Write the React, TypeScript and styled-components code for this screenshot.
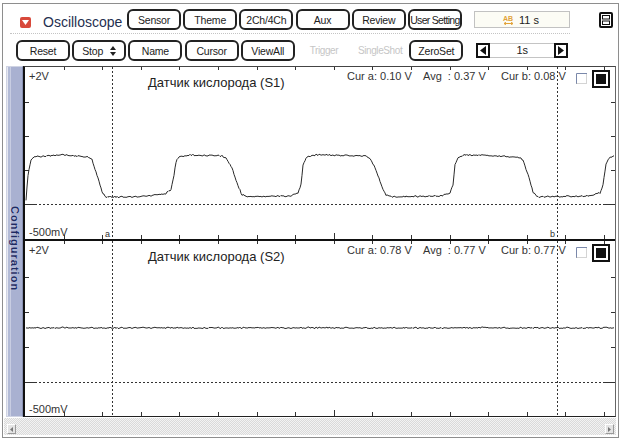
import React from "react";
import styled, { createGlobalStyle } from "styled-components";

const GlobalStyle = createGlobalStyle`
  html, body {
    margin: 0;
    padding: 0;
    background: #fff;
  }
  body {
    font-family: "Liberation Sans", Arial, sans-serif;
  }
`;

const Page = styled.div`
  width: 622px;
  height: 441px;
  box-sizing: border-box;
  padding: 3px 3px 3px 2px;
  background: #fff;
`;

const Frame = styled.div`
  height: 100%;
  box-sizing: border-box;
  border: 1px solid #8e8e8e;
  display: flex;
  flex-direction: column;
  padding-top: 5px;
`;

const TopBar = styled.div`
  display: flex;
  align-items: center;
  height: 21px;
  padding-left: 13px;
`;

const Brand = styled.div`
  width: 111px;
  height: 21px;
  box-sizing: border-box;
  padding: 5px 0 0 4px;
  display: flex;
  align-items: center;
  gap: 12px;
`;

const RedIcon = styled.span`
  width: 11px;
  height: 11px;
  border-radius: 2px;
  background: #d8493b;
  display: flex;
  align-items: center;
  justify-content: center;
`;

const AppTitle = styled.span`
  font-size: 14px;
  line-height: 16px;
  color: #1f3050;
`;

const Group = styled.div`
  display: flex;
  align-items: center;
  gap: 2.2px;
`;

const Btn = styled.button<{ $tight?: boolean }>`
  width: 54px;
  height: 21px;
  box-sizing: border-box;
  padding: 0;
  border: 2px solid #222;
  border-radius: 6px;
  background: #fff;
  color: #222;
  font: 10.5px "Liberation Sans", Arial, sans-serif;
  letter-spacing: ${(p) => (p.$tight ? "-0.7px" : "-0.2px")};
  display: flex;
  align-items: center;
  justify-content: center;
  gap: 7px;
`;

const Ghost = styled.span`
  width: 54px;
  text-align: center;
  font-size: 10px;
  letter-spacing: -0.4px;
  color: #c6c6c6;
`;

const Info = styled.div`
  margin-left: 12px;
  width: 96px;
  height: 17px;
  box-sizing: border-box;
  border: 1px solid #c2c2c2;
  background: #fcfcf5;
  display: flex;
  align-items: center;
  padding-left: 28px;
  gap: 6px;
  font-size: 11px;
  color: #222;
`;

const AbMark = styled.span`
  display: inline-flex;
  flex-direction: column;
  align-items: center;
  font: bold 7px/7px "Liberation Sans", Arial, sans-serif;
  color: #e2a33a;
`;

const CornerIcon = styled.svg`
  margin-left: auto;
  margin-right: 5px;
`;

const Divider = styled.div`
  margin: 3px 0 6px 7px;
  width: 560px;
  border-top: 1px dotted #c4c4c4;
`;

const ToolRow = styled.div`
  display: flex;
  align-items: center;
  height: 21px;
  padding-left: 13px;
  gap: 2.2px;
`;

const Stepper = styled.div`
  margin-left: 10.8px;
  display: flex;
  align-items: center;
`;

const ArrowBox = styled.span`
  width: 14px;
  height: 15px;
  box-sizing: border-box;
  border: 2px solid #111;
  display: flex;
  align-items: center;
  justify-content: center;
`;

const ValueBox = styled.span`
  width: 64px;
  height: 15px;
  box-sizing: border-box;
  border: 1px solid #c4c4c4;
  border-left: none;
  border-right: none;
  font-size: 11px;
  line-height: 13px;
  color: #222;
  text-align: center;
`;

const ChartArea = styled.div`
  display: flex;
  height: 351px;
  margin-top: 5px;
  padding-left: 3px;
`;

const Sidebar = styled.div`
  width: 17px;
  box-sizing: border-box;
  border: 1px solid #cfd3e3;
  border-right-color: #8891b3;
  background: linear-gradient(
    to right,
    #e6e8f1 0 1px,
    #b3bbd6 1px 3px,
    #c8cde2 3px 4px,
    #a9b1d1 4px
  );
  display: flex;
  align-items: center;
  justify-content: center;
  padding-top: 14px;
`;

const SideLabel = styled.span`
  writing-mode: vertical-rl;
  font: bold 11px "Liberation Sans", Arial, sans-serif;
  letter-spacing: 1px;
  color: #1e2b63;
  text-shadow: 0 0 1px #e8ecf8;
`;

const Plot = styled.div`
  width: 593px;
  box-sizing: border-box;
  border-left: 2px solid #111;
  border-right: 1px solid #666;
  border-top: 1px solid #444;
  border-bottom: 1px solid #222;
  display: flex;
  flex-direction: column;
`;

const Panel = styled.div<{ $h: number; $split?: boolean }>`
  position: relative;
  height: ${(p) => p.$h}px;
  border-top: ${(p) => (p.$split ? "2px solid #111" : "none")};
  background: #fff;
`;

const Trace = styled.svg`
  position: absolute;
  left: 0;
  top: 0;
`;

const Overlay = styled.div`
  position: relative;
  height: 100%;
  box-sizing: border-box;
  padding: 3px 0 0 4px;
  display: flex;
  flex-direction: column;
  justify-content: space-between;
  font-size: 11px;
  line-height: 13px;
  color: #333;
`;

const PanelHead = styled.div`
  display: flex;
  align-items: flex-start;
`;

const Cell = styled.span<{ $w: number }>`
  flex: none;
  width: ${(p) => p.$w}px;
  white-space: pre;
`;

const ChannelName = styled(Cell)`
  font-size: 13px;
  line-height: 15px;
  margin-top: 4.5px;
  color: #222;
`;

const DottedBox = styled.svg`
  margin-top: 3px;
`;

const BlackBox = styled.svg`
  margin-left: 5px;
`;

const Scroll = styled.div`
  margin: 1px 0 0 1px;
  width: 612px;
  height: 17px;
  box-sizing: border-box;
  padding: 0 2px 1px 3px;
  display: flex;
  align-items: flex-end;
  justify-content: space-between;
  background: repeating-conic-gradient(#dadada 0 25%, #f3f3f3 0 50%) 0 0 / 2px 2px;
`;

const ScrollKnob = styled.span`
  width: 9px;
  height: 10px;
  box-sizing: border-box;
  border: 1px solid #9a9a9a;
  border-top-color: #fff;
  border-left-color: #fff;
  background: #e4e4e4;
  display: flex;
  align-items: center;
  justify-content: center;
`;

const hash = (n: number) => {
  const s = Math.sin(n * 12.9898 + 78.233) * 43758.5453;
  return s - Math.floor(s);
};

const buildWave = (keys: number[][], noise: number, ox: number, oy: number) => {
  let d = "";
  let k = 0;
  for (let x = keys[0][0]; x <= keys[keys.length - 1][0]; x++) {
    while (k < keys.length - 2 && x > keys[k + 1][0]) k++;
    const [xa, ya] = keys[k];
    const [xb, yb] = keys[k + 1];
    const t = Math.min(1, Math.max(0, (x - xa) / (xb - xa)));
    const r = hash(x);
    let y = ya + (yb - ya) * t + (r - 0.5) * noise * 2;
    if (r > 0.93) y -= 1.5;
    d += `${d ? "L" : "M"}${x - ox} ${(y - oy).toFixed(1)}`;
  }
  return d;
};

const s1Keys = [
  [26, 200], [28, 175], [31, 160], [34, 157], [60, 155], [88, 157], [92, 160],
  [98, 178], [102, 192], [106, 197], [140, 197], [165, 194], [171, 190],
  [174, 175], [176, 162], [179, 157], [190, 155], [222, 156], [226, 158],
  [232, 168], [238, 186], [242, 195], [248, 197], [290, 196], [298, 193],
  [301, 185], [303, 165], [306, 158], [315, 155], [365, 156], [370, 158],
  [376, 170], [382, 187], [386, 195], [392, 197], [440, 196], [450, 193],
  [453, 185], [455, 165], [458, 158], [465, 155], [518, 157], [523, 160],
  [529, 178], [533, 192], [537, 197], [590, 196], [600, 193], [603, 185],
  [606, 165], [609, 158], [614, 156],
];

const s2Keys = [
  [26, 328], [614, 328],
];

interface ChannelProps {
  name: string;
  curA: string;
  avg: string;
  curB: string;
  height: number;
  top: number;
  zeroY: number;
  gridY: number[];
  wave: number[][];
  noise: number;
  markers?: boolean;
  split?: boolean;
}

const Channel: React.FC<ChannelProps> = (props: ChannelProps) => {
  const w = 590;
  const h = props.height;
  const ticks = Array.from({ length: 15 }, (_, i) => Math.round(38.6 * (i + 1)) + 0.5);
  const cursors = [87.5, 532.5];

  return (
    <Panel $h={h} $split={props.split}>
      <Trace width={w} height={h} viewBox={`0 0 ${w} ${h}`}>
        <g stroke="#333" strokeWidth="1" shapeRendering="crispEdges">
          {ticks.map((x, i) => (
            <line key={`t${i}`} x1={x} y1={0} x2={x} y2={3} />
          ))}
          {ticks.map((x, i) => (
            <line key={`b${i}`} x1={x} y1={h} x2={x} y2={h - (i === 7 ? 6 : 4)} />
          ))}
          {props.gridY.map((y) => (
            <line key={`l${y}`} x1={0} y1={y + 0.5} x2={4} y2={y + 0.5} />
          ))}
          {props.gridY.map((y) => (
            <line key={`r${y}`} x1={w - 4} y1={y + 0.5} x2={w} y2={y + 0.5} />
          ))}
          <line x1={0} y1={props.zeroY + 0.5} x2={10} y2={props.zeroY + 0.5} />
          <line x1={w - 12} y1={props.zeroY + 0.5} x2={w} y2={props.zeroY + 0.5} />
          <line
            x1={10}
            y1={props.zeroY + 0.5}
            x2={w - 12}
            y2={props.zeroY + 0.5}
            strokeDasharray="2 2"
          />
          {cursors.map((x) => (
            <line key={`c${x}`} x1={x} y1={0} x2={x} y2={h} strokeDasharray="2 2" />
          ))}
        </g>
        <path
          d={buildWave(props.wave, props.noise, 25, props.top)}
          fill="none"
          stroke="#2a2a2a"
          strokeWidth="1"
        />
        {props.markers && (
          <g fontFamily="Liberation Sans, Arial, sans-serif" fontSize="9" fill="#333">
            <text x={80} y={h - 2}>a</text>
            <text x={525} y={h - 2}>b</text>
          </g>
        )}
      </Trace>
      <Overlay>
        <PanelHead>
          <Cell $w={119}>+2V</Cell>
          <ChannelName $w={199}>{props.name}</ChannelName>
          <Cell $w={76}>{props.curA}</Cell>
          <Cell $w={78}>{props.avg}</Cell>
          <Cell $w={75}>{props.curB}</Cell>
          <DottedBox width="11" height="11" viewBox="0 0 11 11">
            <path d="M0.5 11V0.5H11" fill="none" stroke="#7a88aa" />
            <path d="M0.5 10.5H10.5V0.5" fill="none" stroke="#a8a8a8" strokeDasharray="1 1" />
          </DottedBox>
          <BlackBox width="18" height="18" viewBox="0 0 18 18">
            <rect x="1" y="1" width="16" height="16" fill="#fff" stroke="#111" strokeWidth="2" />
            <rect x="4" y="4" width="10" height="10" fill="#111" />
          </BlackBox>
        </PanelHead>
        <span>-500mV</span>
      </Overlay>
    </Panel>
  );
};

export default function App() {
  return (
    <Page>
      <GlobalStyle />
      <Frame>
        <TopBar>
          <Brand>
            <RedIcon>
              <svg width="7" height="5" viewBox="0 0 7 5">
                <path d="M0 0H7L3.5 5Z" fill="#fff" />
              </svg>
            </RedIcon>
            <AppTitle>Oscilloscope</AppTitle>
          </Brand>
          <Group>
            <Btn>Sensor</Btn>
            <Btn>Theme</Btn>
            <Btn>2Ch/4Ch</Btn>
            <Btn>Aux</Btn>
            <Btn>Review</Btn>
            <Btn $tight>User Setting</Btn>
          </Group>
          <Info>
            <AbMark>
              AB
              <svg width="9" height="3" viewBox="0 0 9 3">
                <path d="M0 1.5H9M0 1.5L2 0M0 1.5L2 3M9 1.5L7 0M9 1.5L7 3" stroke="#e2a33a" strokeWidth="1" />
              </svg>
            </AbMark>
            <span>11 s</span>
          </Info>
          <CornerIcon width="14" height="16" viewBox="0 0 14 16">
            <rect x="1" y="1" width="12" height="14" rx="1" fill="#fff" stroke="#111" strokeWidth="2" />
            <rect x="3.5" y="3.5" width="7" height="3.5" fill="none" stroke="#111" />
            <rect x="3.5" y="9" width="7" height="3.5" fill="none" stroke="#111" />
          </CornerIcon>
        </TopBar>
        <Divider />
        <ToolRow>
          <Btn>Reset</Btn>
          <Btn>
            Stop
            <svg width="6" height="10" viewBox="0 0 6 10">
              <path d="M0 4L3 0L6 4ZM0 6L3 10L6 6Z" fill="#222" />
            </svg>
          </Btn>
          <Btn>Name</Btn>
          <Btn>Cursor</Btn>
          <Btn>ViewAll</Btn>
          <Ghost>Trigger</Ghost>
          <Ghost>SingleShot</Ghost>
          <Btn>ZeroSet</Btn>
          <Stepper>
            <ArrowBox>
              <svg width="6" height="9" viewBox="0 0 6 9">
                <path d="M6 0V9L0 4.5Z" fill="#111" />
              </svg>
            </ArrowBox>
            <ValueBox>1s</ValueBox>
            <ArrowBox>
              <svg width="6" height="9" viewBox="0 0 6 9">
                <path d="M0 0V9L6 4.5Z" fill="#111" />
              </svg>
            </ArrowBox>
          </Stepper>
        </ToolRow>
        <ChartArea>
          <Sidebar>
            <SideLabel>Configuration</SideLabel>
          </Sidebar>
          <Plot>
            <Channel
              name="Датчик кислорода (S1)"
              curA="Cur a: 0.10 V"
              avg="Avg  : 0.37 V"
              curB="Cur b: 0.08 V"
              height={172}
              top={67}
              zeroY={137}
              gridY={[35, 69, 103]}
              wave={s1Keys}
              noise={0.7}
              markers
            />
            <Channel
              name="Датчик кислорода (S2)"
              curA="Cur a: 0.78 V"
              avg="Avg  : 0.77 V"
              curB="Cur b: 0.77 V"
              height={175}
              top={241}
              zeroY={141}
              gridY={[36, 71, 106]}
              wave={s2Keys}
              noise={0.6}
              split
            />
          </Plot>
        </ChartArea>
        <Scroll>
          <ScrollKnob>
            <svg width="3" height="5" viewBox="0 0 3 5">
              <path d="M3 0V5L0 2.5Z" fill="#777" />
            </svg>
          </ScrollKnob>
          <ScrollKnob>
            <svg width="3" height="5" viewBox="0 0 3 5">
              <path d="M0 0V5L3 2.5Z" fill="#777" />
            </svg>
          </ScrollKnob>
        </Scroll>
      </Frame>
    </Page>
  );
}
